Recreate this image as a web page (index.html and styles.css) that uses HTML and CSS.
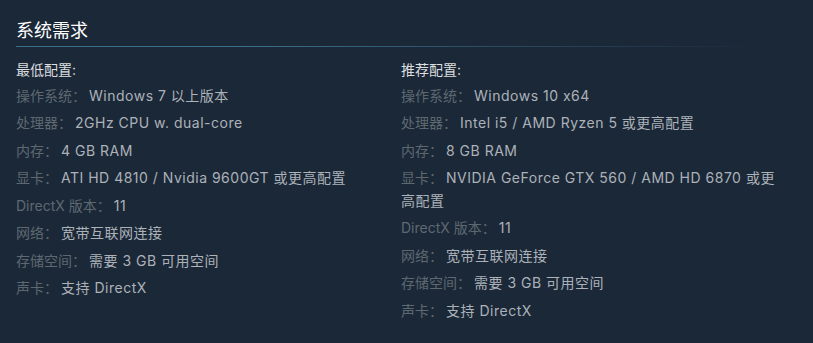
FILE: index.html
```html
<!DOCTYPE html>
<html lang="zh-CN">
<head>
<meta charset="utf-8">
<link rel="stylesheet" href="styles.css">
</head>
<body>
<div class="sysreq">
  <h2 class="title">系统需求</h2>
  <div class="cols">
    <div class="col">
      <ul>
        <li class="head">最低配置:</li>
        <li><span class="lbl">操作系统：</span>Windows 7 以上版本</li>
        <li><span class="lbl">处理器：</span>2GHz CPU w. dual-core</li>
        <li><span class="lbl">内存：</span>4 GB RAM</li>
        <li><span class="lbl">显卡：</span>ATI HD 4810 / Nvidia 9600GT 或更高配置</li>
        <li><span class="lbl">DirectX 版本：</span>11</li>
        <li><span class="lbl">网络：</span>宽带互联网连接</li>
        <li><span class="lbl">存储空间：</span>需要 3 GB 可用空间</li>
        <li><span class="lbl">声卡：</span>支持 DirectX</li>
      </ul>
    </div>
    <div class="col">
      <ul>
        <li class="head">推荐配置:</li>
        <li><span class="lbl">操作系统：</span>Windows 10 x64</li>
        <li><span class="lbl">处理器：</span>Intel i5 / AMD Ryzen 5 或更高配置</li>
        <li><span class="lbl">内存：</span>8 GB RAM</li>
        <li><span class="lbl">显卡：</span>NVIDIA GeForce GTX 560 / AMD HD 6870 或更高配置</li>
        <li><span class="lbl">DirectX 版本：</span>11</li>
        <li><span class="lbl">网络：</span>宽带互联网连接</li>
        <li><span class="lbl">存储空间：</span>需要 3 GB 可用空间</li>
        <li><span class="lbl">声卡：</span>支持 DirectX</li>
      </ul>
    </div>
  </div>
</div>
</body>
</html>
```

FILE: styles.css
```css
html, body {
  margin: 0;
  padding: 0;
  background: #1b2838;
  width: 813px;
  height: 343px;
  overflow: hidden;
}
body {
  font-family: "Inter", "Noto Sans CJK SC", sans-serif;
  font-feature-settings: "calt" 0;
  font-size: 14px;
  color: #acb2b8;
}
.sysreq {
  padding: 18px 30px 0 16px;
}
.title {
  margin: 0;
  font-size: 18px;
  font-weight: normal;
  color: #ffffff;
  line-height: 26px;
  padding-bottom: 3px;
  margin-right: 10px;
}
.title::after {
  content: "";
  display: block;
  height: 1px;
  width: 100%;
  margin-top: 2px;
  background: linear-gradient(to right, #3b6e8c 0%, #3b6e8c 30%, rgba(59,111,140,0) 98%);
}
.cols {
  display: flex;
  margin-top: 9px;
}
.col {
  flex: 0 0 auto;
}
.col:first-child {
  width: 385px;
}
.col:last-child {
  width: 380px;
}
ul {
  list-style: none;
  margin: 0;
  padding: 0;
}
li {
  line-height: 22.5px;
  margin-bottom: 5px;
  letter-spacing: 0.5px;
}
li.head {
  color: #dcdedf;
  margin-bottom: 3px;
  letter-spacing: 0;
}
.lbl {
  color: #5e6870;
  letter-spacing: 0;
  margin-right: 3px;
}
```
